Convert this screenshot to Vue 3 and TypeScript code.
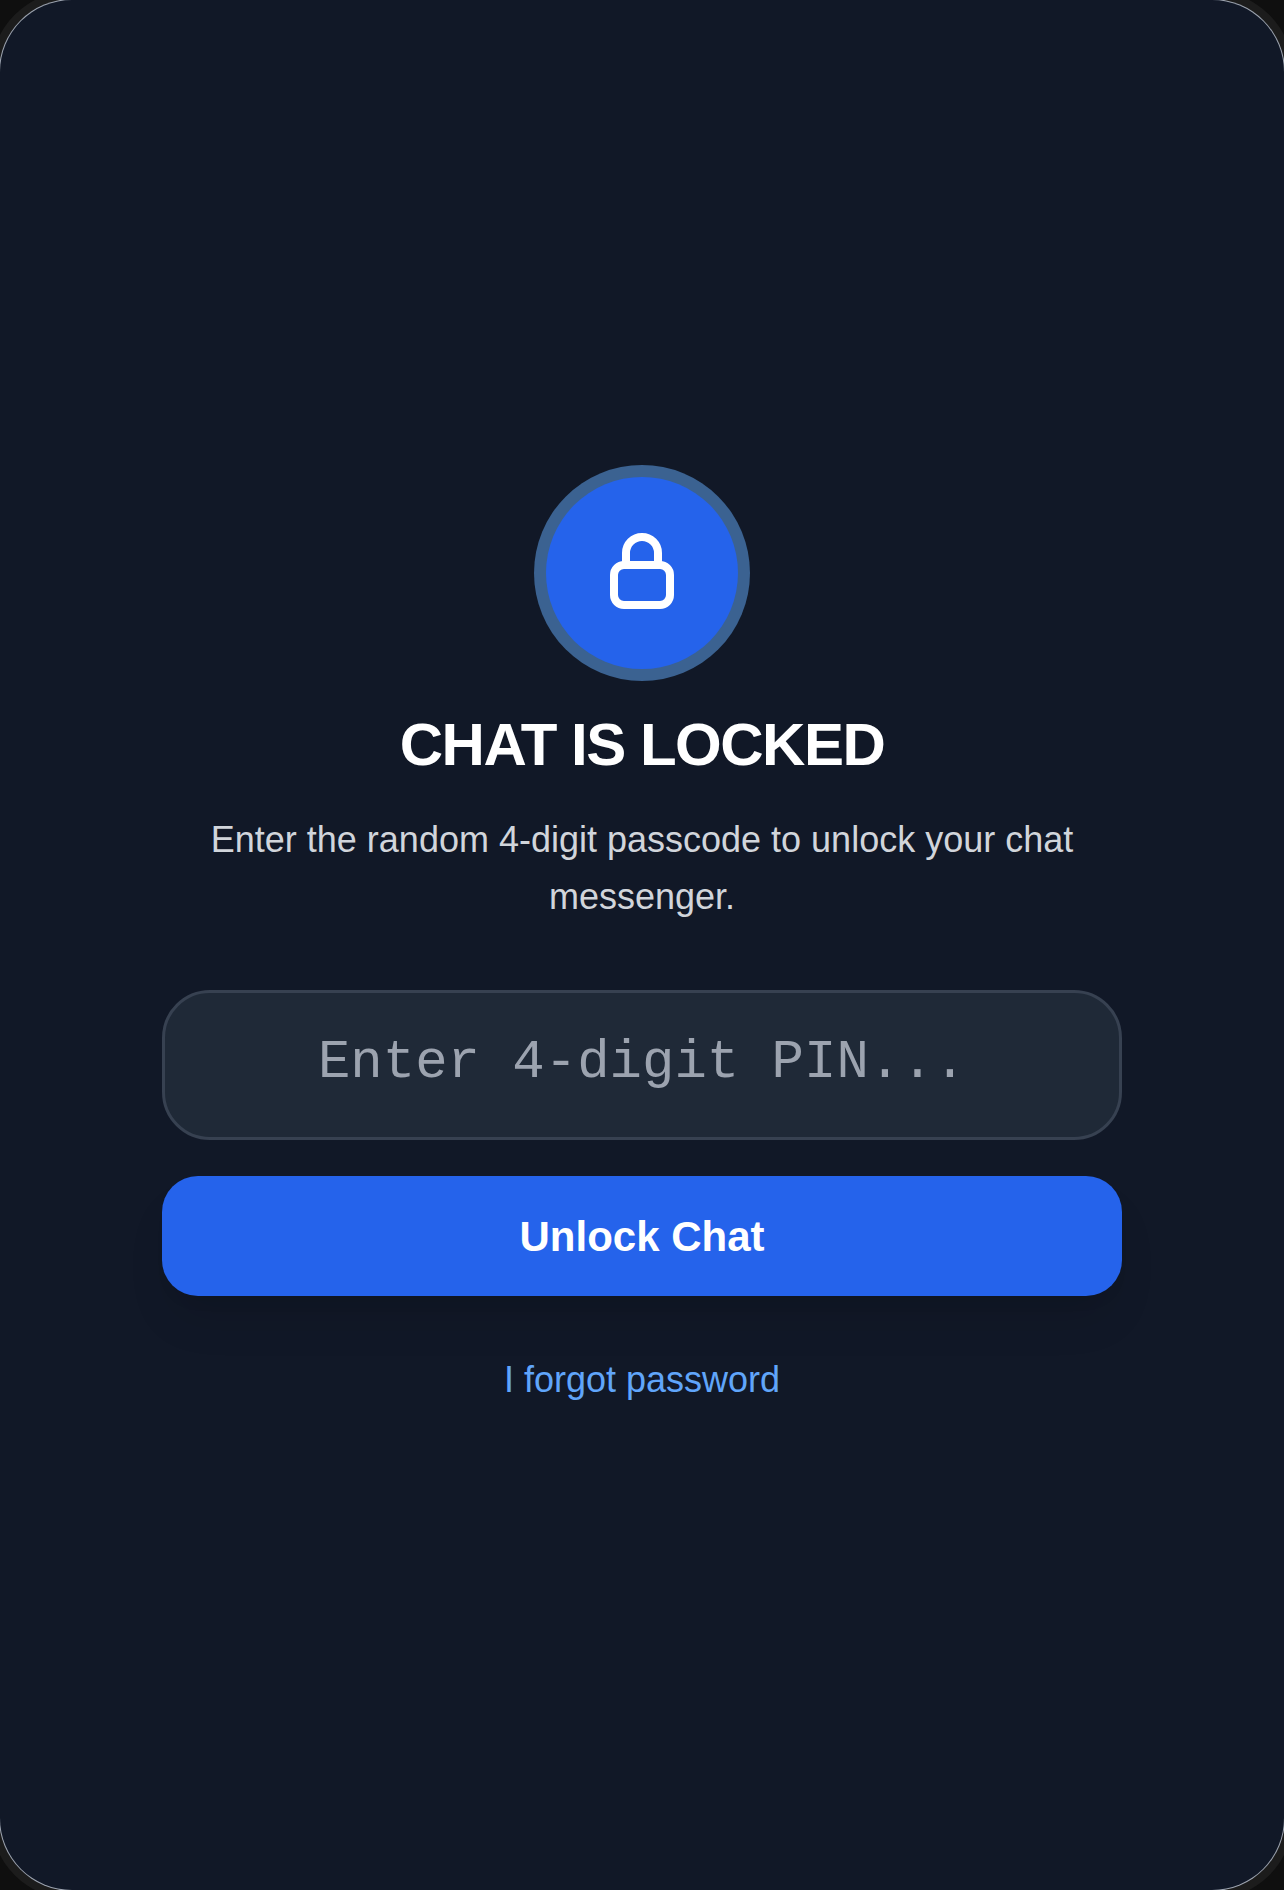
<script setup lang="ts">
import { ref } from 'vue'

const pin = ref('')
</script>

<template>
  <div class="screen">
    <main class="lock-view">
      <div class="lock-badge">
        <svg class="lock-icon" viewBox="0 0 64 80" fill="none" stroke="#fff" stroke-width="8" aria-hidden="true">
          <rect x="4" y="32" width="56" height="40" rx="10" />
          <path d="M16 32V20a16 16 0 0 1 32 0v12" />
        </svg>
      </div>
      <h1>CHAT IS LOCKED</h1>
      <p class="hint">Enter the random 4-digit passcode to unlock your chat messenger.</p>
      <input v-model="pin" class="pin-input" type="text" placeholder="Enter 4-digit PIN..." />
      <button class="unlock-btn" type="button">Unlock Chat</button>
      <a class="forgot" href="#">I forgot password</a>
    </main>
  </div>
</template>

<style>
html,
body {
  margin: 0;
  background: #0f0f0f;
}
</style>

<style scoped>
.screen {
  width: 1284px;
  height: 1890px;
  overflow: hidden;
  box-sizing: border-box;
  border-radius: 72px;
  background: #111827;
  box-shadow: 0 0 0 1px #9ca3af, 0 0 0 9px #1c1c1c;
  font-family: "Liberation Sans", Arial, sans-serif;
  display: flex;
  align-items: center;
  justify-content: center;
}

.lock-view {
  width: 960px;
  display: flex;
  flex-direction: column;
  align-items: center;
}

.lock-badge {
  width: 192px;
  height: 192px;
  border-radius: 50%;
  background: #2563eb;
  box-shadow: 0 0 0 12px #3b6291;
  display: flex;
  align-items: center;
  justify-content: center;
  margin-bottom: 40px;
}

.lock-icon {
  width: 64px;
  height: 80px;
}

h1 {
  margin: 0 0 30px;
  font-size: 60px;
  line-height: 72px;
  font-weight: 700;
  letter-spacing: -1.5px;
  color: #fff;
}

.hint {
  margin: 0 0 65px;
  font-size: 36px;
  line-height: 57px;
  text-align: center;
  color: #d1d5db;
}

.pin-input {
  box-sizing: border-box;
  width: 960px;
  height: 150px;
  margin-bottom: 36px;
  padding: 0 0 6px;
  border: 3px solid #374151;
  border-radius: 48px;
  background: #1f2937;
  color: #fff;
  font-family: "Liberation Mono", monospace;
  font-size: 54px;
  text-align: center;
  outline: none;
}

.pin-input::placeholder {
  color: #9ca3af;
  opacity: 1;
}

.unlock-btn {
  width: 960px;
  height: 120px;
  padding: 2px 0 0;
  border: 0;
  border-radius: 36px;
  background: #2563eb;
  color: #fff;
  font-family: inherit;
  font-size: 42px;
  font-weight: 700;
  box-shadow: 0 30px 45px -9px rgba(0, 0, 0, 0.1), 0 12px 18px -12px rgba(0, 0, 0, 0.1);
  margin-bottom: 60px;
}

.forgot {
  font-size: 36px;
  line-height: 48px;
  padding-bottom: 9px;
  color: #60a5fa;
  text-decoration: none;
}
</style>
